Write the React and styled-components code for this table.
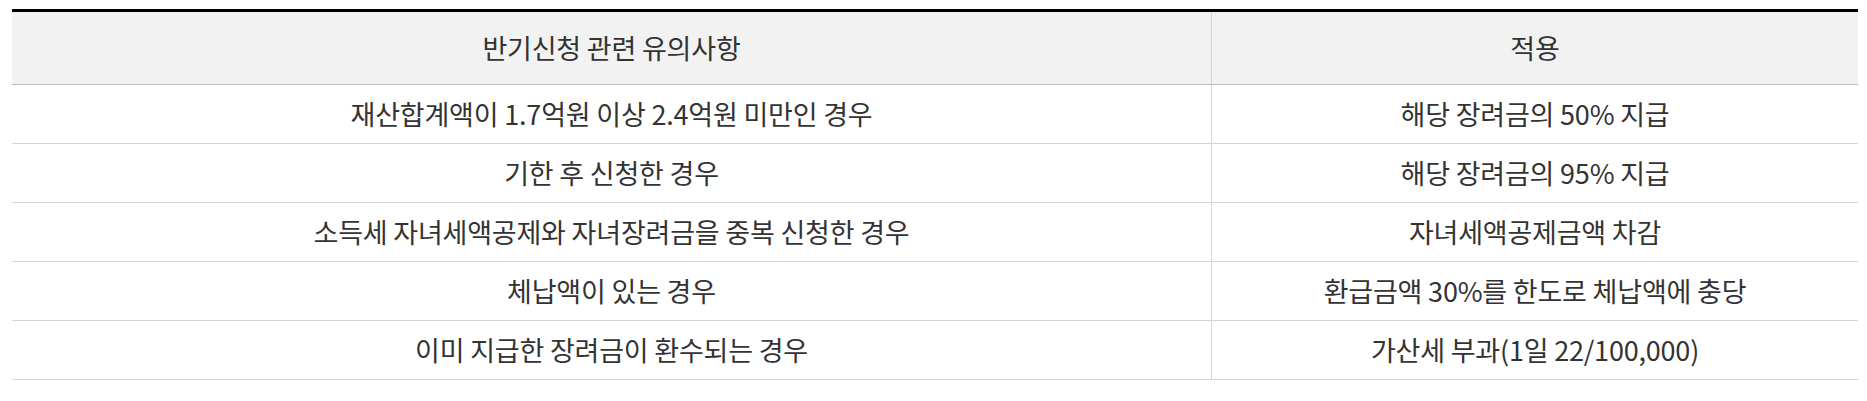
import React from "react";
import styled, { createGlobalStyle } from "styled-components";

const Global = createGlobalStyle`
  html, body { margin: 0; padding: 0; background: #fff; }
  body { font-family: "Noto Sans CJK KR", "Noto Sans", sans-serif; }
`;

const Wrap = styled.div`
  padding: 9px 9px 0 12px;
`;

const Table = styled.table`
  width: 100%;
  border-collapse: collapse;
  table-layout: fixed;
  border-top: 3px solid #000;
  font-family: "Noto Sans CJK KR", "Noto Sans", sans-serif;
  color: #333;
`;

const HeadCell = styled.th`
  height: 72px;
  padding: 0;
  background: #f2f2f2;
  font-weight: 400;
  font-size: 27px;
  line-height: 1.3;
  letter-spacing: -0.2px;
  text-align: center;
  vertical-align: middle;
  border-bottom: 1px solid #bbb;
  border-left: ${(p) => (p.$first ? "none" : "1px solid #d4d4d4")};
  width: ${(p) => p.$w};
`;

const Cell = styled.td`
  height: 58px;
  padding: 0;
  font-size: 27px;
  line-height: 1.3;
  letter-spacing: -0.2px;
  text-align: center;
  vertical-align: middle;
  border-bottom: 1px solid #d4d4d4;
  border-left: ${(p) => (p.$first ? "none" : "1px solid #d4d4d4")};
`;

const rows = [
  ["재산합계액이 1.7억원 이상 2.4억원 미만인 경우", "해당 장려금의 50% 지급"],
  ["기한 후 신청한 경우", "해당 장려금의 95% 지급"],
  ["소득세 자녀세액공제와 자녀장려금을 중복 신청한 경우", "자녀세액공제금액 차감"],
  ["체납액이 있는 경우", "환급금액 30%를 한도로 체납액에 충당"],
  ["이미 지급한 장려금이 환수되는 경우", "가산세 부과(1일 22/100,000)"],
];

export default function App() {
  return (
    <Wrap>
      <Global />
      <Table>
        <thead>
          <tr>
            <HeadCell $first $w="1199px">반기신청 관련 유의사항</HeadCell>
            <HeadCell>적용</HeadCell>
          </tr>
        </thead>
        <tbody>
          {rows.map(([a, b]) => (
            <tr key={a}>
              <Cell $first>{a}</Cell>
              <Cell>{b}</Cell>
            </tr>
          ))}
        </tbody>
      </Table>
    </Wrap>
  );
}
